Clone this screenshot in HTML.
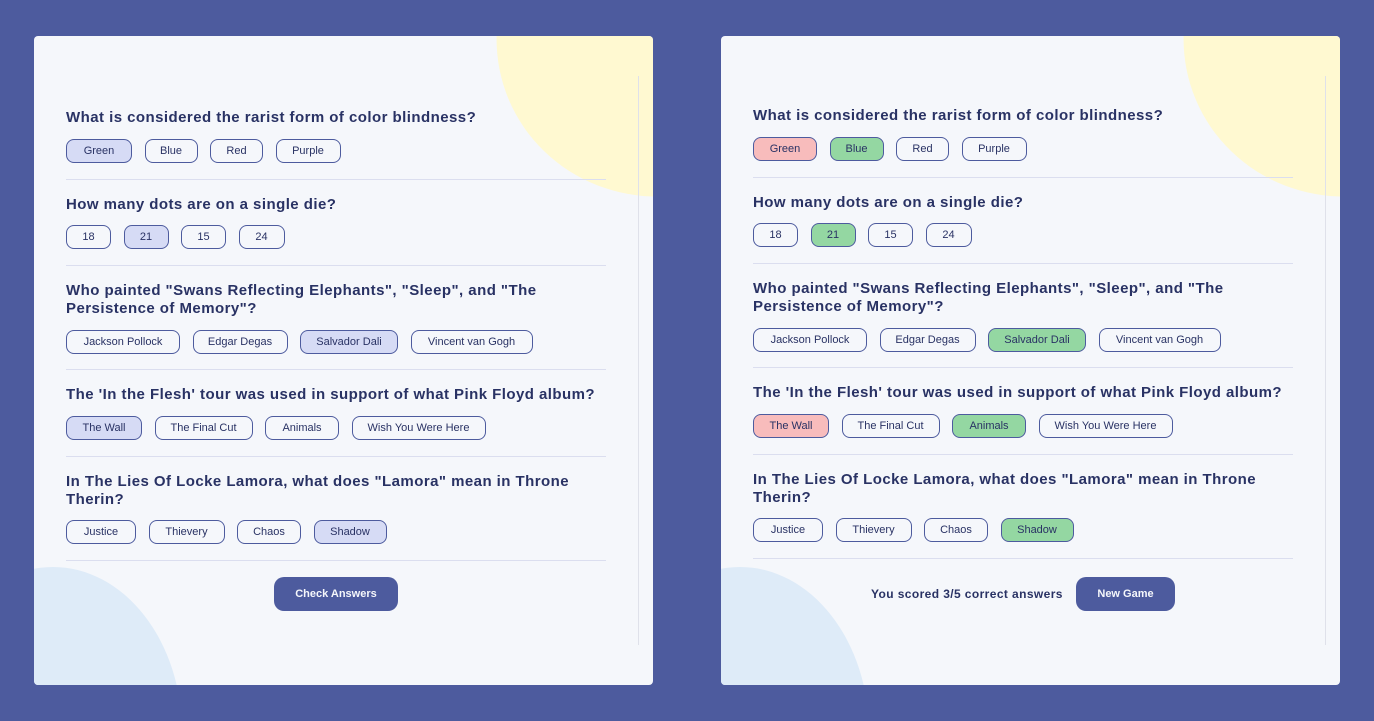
<!DOCTYPE html>
<html><head><style>
html,body{margin:0;width:1374px;height:721px;overflow:hidden}
body{background:#4d5b9e;font-family:"Liberation Sans",sans-serif;position:relative}
.p{position:absolute;top:36px;width:619px;height:649px;background:#f5f7fb;border-radius:4px;overflow:hidden}
.y{position:absolute;left:462px;top:-160px;width:330px;height:320px;border-radius:50%;background:#fff9d1;transform:rotate(-20deg)}
.b{position:absolute;left:-110px;top:531px;width:258px;height:300px;border-radius:50% 50% 0 0/55% 55% 0 0;background:#deebf8}
.sb{position:absolute;left:604px;top:40px;width:1px;height:569px;background:#dfe1ea}
.q{position:absolute;left:32px;font-weight:bold;font-size:15px;letter-spacing:0.45px;color:#293264;line-height:18px;width:535px}
.r{position:absolute;left:32px;display:flex;gap:12.5px}
.o{border:1px solid #4d5b9e;border-radius:8px;font-size:11px;color:#293264;display:flex;align-items:center;justify-content:center;box-sizing:border-box;height:24px}
.s{background:#d6dbf5}.g{background:#94d7a2}.w{background:#f8bcbc}
.d{position:absolute;left:32px;width:540px;height:1px;background:#dbdeef}
.btn{position:absolute;background:#4d5b9e;color:#f5f7fb;font-weight:bold;font-size:11px;border-radius:10px;display:flex;align-items:center;justify-content:center;height:34px}
</style></head><body>
<div class="p" style="left:34px">
<div class="y"></div><div class="b"></div><div class="sb"></div>
<div class="q" style="top:73px">What is considered the rarist form of color blindness?</div>
<div class="r" style="top:103px"><div class="o s" style="width:66px">Green</div><div class="o" style="width:53px">Blue</div><div class="o" style="width:53px">Red</div><div class="o" style="width:65px">Purple</div></div>
<div class="d" style="top:143px"></div>
<div class="q" style="top:160px">How many dots are on a single die?</div>
<div class="r" style="top:189px"><div class="o" style="width:45px">18</div><div class="o s" style="width:45px">21</div><div class="o" style="width:45px">15</div><div class="o" style="width:46px">24</div></div>
<div class="d" style="top:229px"></div>
<div class="q" style="top:246px">Who painted "Swans Reflecting Elephants", "Sleep", and "The Persistence of Memory"?</div>
<div class="r" style="top:294px"><div class="o" style="width:114px">Jackson Pollock</div><div class="o" style="width:95px">Edgar Degas</div><div class="o s" style="width:98px">Salvador Dali</div><div class="o" style="width:122px">Vincent van Gogh</div></div>
<div class="d" style="top:333px"></div>
<div class="q" style="top:350px">The 'In the Flesh' tour was used in support of what Pink Floyd album?</div>
<div class="r" style="top:380px"><div class="o s" style="width:76px">The Wall</div><div class="o" style="width:98px">The Final Cut</div><div class="o" style="width:74px">Animals</div><div class="o" style="width:134px">Wish You Were Here</div></div>
<div class="d" style="top:420px"></div>
<div class="q" style="top:437px">In The Lies Of Locke Lamora, what does "Lamora" mean in Throne Therin?</div>
<div class="r" style="top:484px"><div class="o" style="width:70px">Justice</div><div class="o" style="width:76px">Thievery</div><div class="o" style="width:64px">Chaos</div><div class="o s" style="width:73px">Shadow</div></div>
<div class="d" style="top:524px"></div>
<div class="btn" style="left:240px;top:541px;width:124px">Check Answers</div>
</div>
<div class="p" style="left:721px">
<div class="y"></div><div class="b"></div><div class="sb"></div>
<div class="q" style="top:71px">What is considered the rarist form of color blindness?</div>
<div class="r" style="top:101px"><div class="o w" style="width:64px">Green</div><div class="o g" style="width:54px">Blue</div><div class="o" style="width:53px">Red</div><div class="o" style="width:65px">Purple</div></div>
<div class="d" style="top:141px"></div>
<div class="q" style="top:158px">How many dots are on a single die?</div>
<div class="r" style="top:187px"><div class="o" style="width:45px">18</div><div class="o g" style="width:45px">21</div><div class="o" style="width:45px">15</div><div class="o" style="width:46px">24</div></div>
<div class="d" style="top:227px"></div>
<div class="q" style="top:244px">Who painted "Swans Reflecting Elephants", "Sleep", and "The Persistence of Memory"?</div>
<div class="r" style="top:292px"><div class="o" style="width:114px">Jackson Pollock</div><div class="o" style="width:96px">Edgar Degas</div><div class="o g" style="width:98px">Salvador Dali</div><div class="o" style="width:122px">Vincent van Gogh</div></div>
<div class="d" style="top:331px"></div>
<div class="q" style="top:348px">The 'In the Flesh' tour was used in support of what Pink Floyd album?</div>
<div class="r" style="top:378px"><div class="o w" style="width:76px">The Wall</div><div class="o" style="width:98px">The Final Cut</div><div class="o g" style="width:74px">Animals</div><div class="o" style="width:134px">Wish You Were Here</div></div>
<div class="d" style="top:418px"></div>
<div class="q" style="top:435px">In The Lies Of Locke Lamora, what does "Lamora" mean in Throne Therin?</div>
<div class="r" style="top:482px"><div class="o" style="width:70px">Justice</div><div class="o" style="width:76px">Thievery</div><div class="o" style="width:64px">Chaos</div><div class="o g" style="width:73px">Shadow</div></div>
<div class="d" style="top:522px"></div>
<div style="position:absolute;left:150px;top:551px;font-weight:bold;font-size:12px;letter-spacing:0.4px;color:#293264">You scored 3/5 correct answers</div>
<div class="btn" style="left:355px;top:541px;width:99px">New Game</div>
</div>
</body></html>
